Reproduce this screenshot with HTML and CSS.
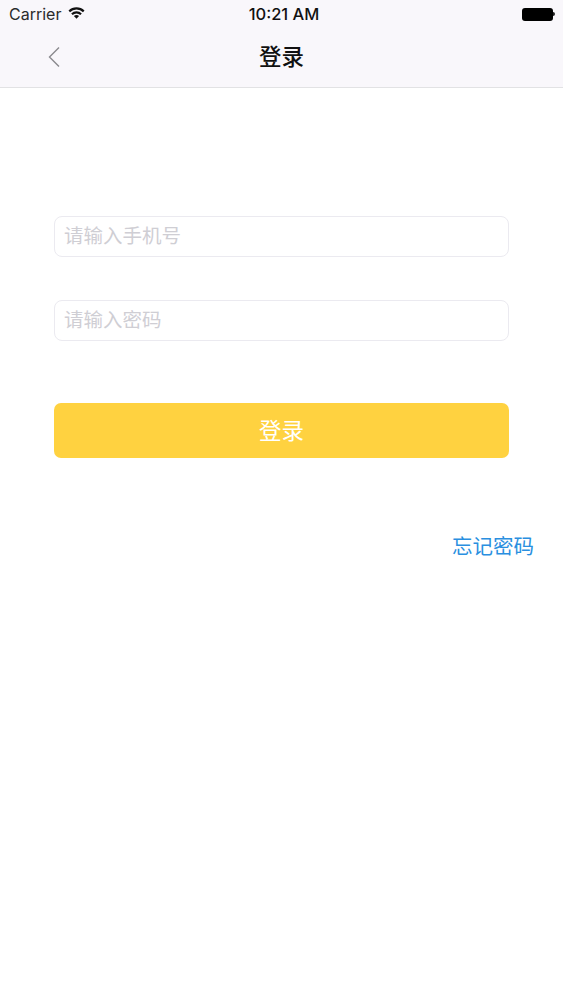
FILE: index.html
```html
<!DOCTYPE html>
<html lang="zh-CN">
<head>
    <meta charset="UTF-8">
    <meta name="viewport" content="width=device-width, initial-scale=1.0">
    <title>登录</title>
    <link rel="stylesheet" href="styles.css">
</head>
<body>
    <div class="header">
        <div class="status-bar">
            <div class="status-left">
                <span class="carrier">Carrier</span>
                <svg class="wifi" width="17" height="12" viewBox="0 0 17 12">
                    <path d="M0.5 3.6 A11.5 11.5 0 0 1 16.5 3.6 L15 5.2 A9.3 9.3 0 0 0 2 5.2 Z" fill="#111"/>
                    <path d="M3.2 6.4 A7.6 7.6 0 0 1 13.8 6.4 L12.3 8 A5.4 5.4 0 0 0 4.7 8 Z" fill="#111"/>
                    <path d="M5.9 9.1 A3.8 3.8 0 0 1 11.1 9.1 L8.5 11.8 Z" fill="#111"/>
                </svg>
            </div>
            <div class="time">10:21 AM</div>
            <div class="battery">
                <div class="battery-body"></div>
                <div class="battery-tip"></div>
            </div>
        </div>
        <div class="nav-bar">
            <svg class="back" width="14" height="22" viewBox="0 0 14 22">
                <path d="M12 1.5 L2.5 11 L12 20.5" fill="none" stroke="#8a8a8e" stroke-width="1.4"/>
            </svg>
            <div class="nav-title">登录</div>
        </div>
    </div>

    <form class="login-form">
        <input class="field" type="text" placeholder="请输入手机号">
        <input class="field" type="password" placeholder="请输入密码">
        <button class="submit" type="button">登录</button>
    </form>

    <div class="form-link">
        <a href="#">忘记密码</a>
    </div>
</body>
</html>
```

FILE: styles.css
```css
body {
    margin: 0;
    padding: 0;
    background-color: #fff;
    font-family: "Liberation Sans", "Noto Sans CJK SC", sans-serif;
}

.header {
    height: 87px;
    background-color: #f9f7fb;
    border-bottom: 1px solid #e2e2e4;
}

.status-bar {
    position: relative;
    display: flex;
    justify-content: space-between;
    align-items: center;
    height: 29px;
    padding: 0 8px 0 9px;
}

.status-left {
    display: flex;
    align-items: center;
    gap: 7px;
}

.carrier {
    margin-top: -2px;
    font-family: "Inter", "Liberation Sans", sans-serif;
    font-size: 16px;
    color: #2b2b2b;
}

.wifi {
    margin-top: -3px;
}

/* centred on the window, not between the side items */
.time {
    position: absolute;
    left: 0;
    right: 0;
    margin-top: -2px;
    padding-left: 5px;
    text-align: center;
    font-family: "Inter", "Liberation Sans", sans-serif;
    font-size: 16.5px;
    font-weight: 500;
    color: #111;
}

.battery {
    display: flex;
    align-items: center;
    margin-top: -1px;
}

.battery-body {
    width: 31px;
    height: 13px;
    background-color: #000;
    border-radius: 3px;
}

.battery-tip {
    width: 2px;
    height: 4px;
    background-color: #222;
    border-radius: 0 2px 2px 0;
}

.nav-bar {
    position: relative;
    display: flex;
    justify-content: center;
    align-items: center;
    box-sizing: border-box;
    height: 58px;
    padding-bottom: 6px;
}

.back {
    position: absolute;
    left: 47px;
    top: 17px;
}

.nav-title {
    font-size: 22.5px;
    font-weight: 500;
    color: #111;
}

.login-form {
    display: flex;
    flex-direction: column;
    margin: 128px 54px 0;
}

.field {
    height: 41px;
    box-sizing: border-box;
    margin-bottom: 43px;
    padding: 0 9px;
    background-color: #fff;
    border: 1px solid #ebeaf0;
    border-radius: 8px;
    font-family: inherit;
    font-size: 19.5px;
    outline: none;
}

.field::placeholder {
    color: #cfced4;
}

.submit {
    height: 55px;
    margin-top: 19px;
    padding: 0 0 3px;
    background-color: #ffd240;
    color: #fff;
    border: none;
    border-radius: 7px;
    font-family: inherit;
    font-size: 22.5px;
}

.form-link {
    margin-top: 72px;
    padding-right: 29px;
    text-align: right;
}

.form-link a {
    color: #2a8fe0;
    font-size: 20.5px;
    text-decoration: none;
}
```
